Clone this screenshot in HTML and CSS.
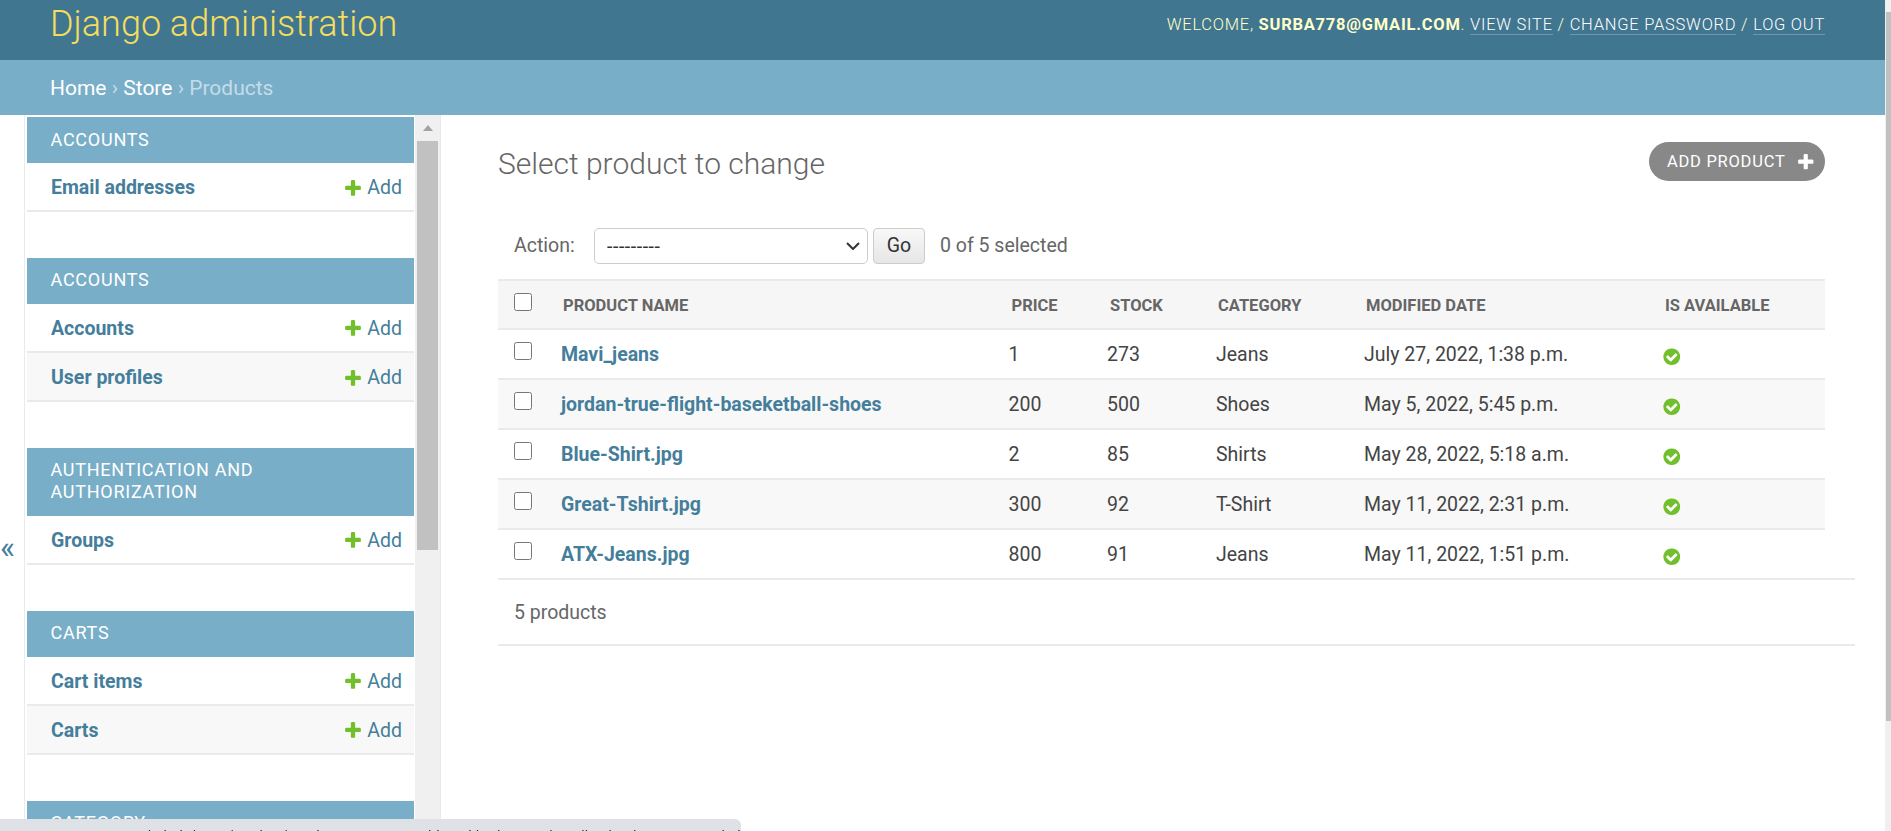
FILE: index.html
```html
<!DOCTYPE html>
<html lang="en">
  <head>
    <meta charset="UTF-8" />
    <title>Select product to change | Django site admin</title>
    <link rel="stylesheet" href="styles.css">
  </head>
  <body>
    <svg class="defs" width="0" height="0">
      <symbol id="plus" viewBox="0 0 1792 1792">
        <path d="M1600 796v192q0 40-28 68t-68 28h-416v416q0 40-28 68t-68 28h-192q-40 0-68-28t-28-68v-416h-416q-40 0-68-28t-28-68v-192q0-40 28-68t68-28h416v-416q0-40 28-68t68-28h192q40 0 68 28t28 68v416h416q40 0 68 28t28 68z"/>
      </symbol>
      <symbol id="yes" viewBox="0 0 1792 1792">
        <path d="M1412 734q0-28-18-46l-91-90q-19-19-45-19t-45 19l-408 407-226-226q-19-19-45-19t-45 19l-91 90q-18 18-18 46 0 27 18 45l362 362q19 19 45 19 27 0 46-19l543-543q18-18 18-45zm252 162q0 209-103 385.5t-279.5 279.5-385.5 103-385.5-103-279.5-279.5-103-385.5 103-385.5 279.5-279.5 385.5-103 385.5 103 279.5 279.5 103 385.5z"/>
      </symbol>
    </svg>

    <div class="page">
      <div class="page-column">
        <header class="header">
          <div class="branding">Django administration</div>
          <div class="user-tools">
            Welcome, <strong>surba778@gmail.com</strong>.
            <a href="#">View site</a> /
            <a href="#">Change password</a> /
            <a href="#">Log out</a>
          </div>
        </header>
        <nav class="breadcrumbs">
          <a href="#">Home</a> › <a href="#">Store</a> › Products
        </nav>

        <div class="main">
          <div class="nav-toggle">«</div>
          <aside class="sidebar">
            <div class="sidebar-list">
              <section class="module">
                <h2 class="caption">Accounts</h2>
                <div class="model-row"><a class="model-name" href="#">Email addresses</a><a class="add-link" href="#"><svg class="icon-add"><use href="#plus"/></svg>Add</a></div>
              </section>
              <section class="module">
                <h2 class="caption">Accounts</h2>
                <div class="model-row"><a class="model-name" href="#">Accounts</a><a class="add-link" href="#"><svg class="icon-add"><use href="#plus"/></svg>Add</a></div>
                <div class="model-row alt"><a class="model-name" href="#">User profiles</a><a class="add-link" href="#"><svg class="icon-add"><use href="#plus"/></svg>Add</a></div>
              </section>
              <section class="module">
                <h2 class="caption">Authentication and Authorization</h2>
                <div class="model-row"><a class="model-name" href="#">Groups</a><a class="add-link" href="#"><svg class="icon-add"><use href="#plus"/></svg>Add</a></div>
              </section>
              <section class="module">
                <h2 class="caption">Carts</h2>
                <div class="model-row"><a class="model-name" href="#">Cart items</a><a class="add-link" href="#"><svg class="icon-add"><use href="#plus"/></svg>Add</a></div>
                <div class="model-row alt"><a class="model-name" href="#">Carts</a><a class="add-link" href="#"><svg class="icon-add"><use href="#plus"/></svg>Add</a></div>
              </section>
              <section class="module">
                <h2 class="caption">Category</h2>
              </section>
            </div>
            <div class="side-scroll">
              <div class="side-arrow"></div>
              <div class="side-thumb"></div>
            </div>
          </aside>

          <main class="content">
            <div class="content-head">
              <h1 class="title">Select product to change</h1>
              <a class="add-button" href="#">Add product<svg class="icon-btn"><use href="#plus"/></svg></a>
            </div>

            <div class="actions">
              <label class="action-label">Action:</label>
              <select class="action-select">
                <option>---------</option>
              </select>
              <button class="go-button" type="button">Go</button>
              <span class="action-counter">0 of 5 selected</span>
            </div>

            <table class="results">
              <colgroup>
                <col class="col-check" />
                <col class="col-name" />
                <col class="col-price" />
                <col class="col-stock" />
                <col class="col-category" />
                <col class="col-date" />
                <col class="col-available" />
              </colgroup>
              <thead>
                <tr>
                  <th><input type="checkbox" /></th>
                  <th>Product name</th>
                  <th>Price</th>
                  <th>Stock</th>
                  <th>Category</th>
                  <th>Modified date</th>
                  <th>Is available</th>
                </tr>
              </thead>
              <tbody>
                <tr>
                  <td><input type="checkbox" /></td>
                  <td><a href="#">Mavi_jeans</a></td>
                  <td>1</td>
                  <td>273</td>
                  <td>Jeans</td>
                  <td>July 27, 2022, 1:38 p.m.</td>
                  <td><svg class="icon-yes"><use href="#yes"/></svg></td>
                </tr>
                <tr>
                  <td><input type="checkbox" /></td>
                  <td><a href="#">jordan-true-flight-baseketball-shoes</a></td>
                  <td>200</td>
                  <td>500</td>
                  <td>Shoes</td>
                  <td>May 5, 2022, 5:45 p.m.</td>
                  <td><svg class="icon-yes"><use href="#yes"/></svg></td>
                </tr>
                <tr>
                  <td><input type="checkbox" /></td>
                  <td><a href="#">Blue-Shirt.jpg</a></td>
                  <td>2</td>
                  <td>85</td>
                  <td>Shirts</td>
                  <td>May 28, 2022, 5:18 a.m.</td>
                  <td><svg class="icon-yes"><use href="#yes"/></svg></td>
                </tr>
                <tr>
                  <td><input type="checkbox" /></td>
                  <td><a href="#">Great-Tshirt.jpg</a></td>
                  <td>300</td>
                  <td>92</td>
                  <td>T-Shirt</td>
                  <td>May 11, 2022, 2:31 p.m.</td>
                  <td><svg class="icon-yes"><use href="#yes"/></svg></td>
                </tr>
                <tr>
                  <td><input type="checkbox" /></td>
                  <td><a href="#">ATX-Jeans.jpg</a></td>
                  <td>800</td>
                  <td>91</td>
                  <td>Jeans</td>
                  <td>May 11, 2022, 1:51 p.m.</td>
                  <td><svg class="icon-yes"><use href="#yes"/></svg></td>
                </tr>
              </tbody>
            </table>
            <p class="paginator">5 products</p>
          </main>
        </div>
      </div>

      <div class="page-scroll">
        <div class="page-thumb"></div>
      </div>
    </div>

    <div class="status-bubble">127.0.0.1:8000/admin/store/product/?surba778=Great+Tshirt+with+the+product+list+in+the+store+variation/9/set</div>
  </body>
</html>
```

FILE: styles.css
```css
html,
body {
  margin: 0;
  height: 100%;
  overflow: hidden;
}
body {
  font-family: Roboto, "Liberation Sans", sans-serif;
  font-size: 19.5px;
  color: #444;
  background: #fff;
}
a {
  text-decoration: none;
  color: #447e9b;
}
.defs {
  position: absolute;
}
.page {
  display: flex;
  height: 831px;
}
.page-column {
  flex: 1;
  min-width: 0;
  display: flex;
  flex-direction: column;
}
.page-scroll {
  width: 6px;
  background: #f0f0f0;
  padding-top: 12px;
  box-sizing: border-box;
}
.page-thumb {
  height: 709px;
  margin-left: 1px;
  background: #c1c1c1;
}

/* header */
.header {
  height: 60px;
  flex: none;
  background: #417690;
  display: flex;
  justify-content: space-between;
  box-sizing: border-box;
  padding: 0 60px 0 50px;
}
.branding {
  font-size: 36px;
  font-weight: 300;
  line-height: 48px;
  color: #f5dd5d;
}
.user-tools {
  font-size: 16.5px;
  font-weight: 300;
  line-height: 49px;
  color: #ffc;
  text-transform: uppercase;
  letter-spacing: 0.75px;
}
.user-tools strong {
  font-weight: 700;
}
.user-tools a {
  color: #fff;
  border-bottom: 1px solid rgba(255, 255, 255, 0.25);
}
.breadcrumbs {
  height: 55px;
  flex: none;
  background: #79aec8;
  box-sizing: border-box;
  padding-left: 50px;
  line-height: 57px;
  font-size: 21px;
  color: #c4dce8;
}
.breadcrumbs a {
  color: #fff;
}

/* sidebar */
.main {
  flex: 1;
  min-height: 0;
  display: flex;
}
.nav-toggle {
  width: 24px;
  flex: none;
  box-sizing: border-box;
  padding-top: 414px;
  font-size: 32px;
  line-height: 36px;
  color: #447e9b;
}
.sidebar {
  width: 415px;
  flex: none;
  display: flex;
  overflow: hidden;
  border-left: 1px solid #eaeaea;
  border-right: 1px solid #eaeaea;
}
.sidebar-list {
  width: 387px;
  margin-left: 2px;
  padding-top: 2px;
  flex: none;
}
.side-scroll {
  width: 25px;
  margin-left: 1px;
  flex: none;
  background: #f0f0f0;
  box-sizing: border-box;
  padding: 0 2px;
}
.side-arrow {
  width: 0;
  height: 0;
  margin: 10px auto 0;
  border-left: 5.5px solid transparent;
  border-right: 5.5px solid transparent;
  border-bottom: 6px solid #a3a3a3;
}
.side-thumb {
  height: 409px;
  margin-top: 10px;
  background: #c1c1c1;
}
.module {
  margin-bottom: 45.6px;
}
.caption {
  margin: 0;
  padding: 11.5px 23.5px 12.5px;
  background: #79aec8;
  color: #fff;
  font-size: 18px;
  font-weight: 400;
  line-height: 22px;
  letter-spacing: 0.75px;
  text-transform: uppercase;
}
.model-row {
  height: 49.2px;
  box-sizing: border-box;
  display: flex;
  justify-content: space-between;
  align-items: center;
  padding: 2px 12px 0 24px;
  border-bottom: 2px solid #eaeaea;
}
.model-row.alt {
  background: #f8f8f8;
}
.model-name {
  font-weight: 700;
}
.add-link {
  display: flex;
  align-items: center;
}
.icon-add {
  width: 20px;
  height: 20px;
  margin-right: 4px;
  fill: #70bf2b;
}

/* content */
.content {
  flex: 1;
  min-width: 0;
  padding: 0 30px 0 57px;
}
.content-head {
  display: flex;
  justify-content: space-between;
  align-items: flex-start;
  padding: 27px 30px 0 0;
  height: 87px;
  box-sizing: border-box;
}
.title {
  margin: 0;
  font-size: 30px;
  font-weight: 300;
  line-height: 44px;
  color: #666;
}
.add-button {
  height: 39px;
  box-sizing: border-box;
  display: flex;
  align-items: center;
  padding: 0 10px 0 18px;
  border-radius: 20px;
  background: #888;
  color: #fff;
  font-size: 16.5px;
  letter-spacing: 0.75px;
  text-transform: uppercase;
}
.icon-btn {
  width: 19.5px;
  height: 19.5px;
  margin-left: 10px;
  fill: #fff;
}
.actions {
  display: flex;
  align-items: center;
  height: 77px;
  padding: 10px 0 0 16px;
  margin-right: 30px;
  box-sizing: border-box;
  color: #666;
}
.action-label {
  width: 80px;
}
.action-select {
  width: 274px;
  height: 36px;
  box-sizing: border-box;
  border: 1px solid #ccc;
  border-radius: 5px;
  padding: 2px 12px 0;
  appearance: none;
  background: #fff url("data:image/svg+xml,%3Csvg xmlns='http://www.w3.org/2000/svg' width='14' height='8' viewBox='0 0 14 8'%3E%3Cpath d='M1 1l6 6 6-6' fill='none' stroke='%23333' stroke-width='2'/%3E%3C/svg%3E") no-repeat right 7px center;
  font-family: inherit;
  font-size: 19.5px;
  letter-spacing: 0.55px;
  color: #333;
}
.go-button {
  width: 52px;
  height: 36px;
  margin-left: 5px;
  border: 1px solid #ccc;
  border-radius: 4px;
  background: linear-gradient(#f8f8f8, #e6e6e6);
  font-family: inherit;
  font-size: 19.5px;
  color: #333;
  padding: 0;
}
.action-counter {
  margin: 0 0 1px 15px;
}
.results {
  width: 1327px;
  border-collapse: collapse;
  table-layout: fixed;
}
.col-check {
  width: 51px;
}
.col-name {
  width: 447.5px;
}
.col-price {
  width: 98.5px;
}
.col-stock {
  width: 109px;
}
.col-category {
  width: 148px;
}
.col-date {
  width: 299px;
}
.col-available {
  width: 174px;
}
.results th {
  height: 45px;
  padding: 2px 0 0 14px;
  background: #f6f6f6;
  border-top: 2px solid #eaeaea;
  border-bottom: 2px solid #eaeaea;
  font-size: 16.5px;
  font-weight: 700;
  color: #666;
  text-align: left;
  text-transform: uppercase;
}
.results th:nth-child(3),
.results th:nth-child(4) {
  padding-left: 15px;
}
.results td {
  height: 48px;
  padding: 0 0 0 12px;
  border-bottom: 2px solid #eaeaea;
}
.results tbody tr:nth-child(even) td {
  background: #f8f8f8;
}
.results tbody tr:last-child td {
  border-bottom: 0;
}
.results th:first-child,
.results td:first-child {
  padding-left: 16px;
}
.results input[type="checkbox"] {
  width: 18px;
  height: 18px;
  margin: 0 0 6px;
  vertical-align: middle;
}
.results th input[type="checkbox"] {
  margin-bottom: 8px;
}
.results td a {
  font-weight: 700;
}
.icon-yes {
  width: 19.5px;
  height: 19.5px;
  margin: 3px 0 0 -1px;
  vertical-align: middle;
  fill: #70bf2b;
}
.paginator {
  margin: 0;
  height: 68px;
  box-sizing: border-box;
  padding-left: 16px;
  line-height: 65px;
  border-top: 2px solid #eaeaea;
  border-bottom: 2px solid #eaeaea;
  color: #666;
}

/* browser link preview at the bottom of the window */
.status-bubble {
  position: fixed;
  left: 0;
  bottom: 0;
  width: 741px;
  height: 12px;
  box-sizing: border-box;
  padding: 8px 0 0 46px;
  overflow: hidden;
  white-space: nowrap;
  background: #dee1e6;
  border-top-right-radius: 6px;
  font-family: "Liberation Sans", sans-serif;
  font-size: 15px;
  line-height: 18px;
  color: #333;
}
```
